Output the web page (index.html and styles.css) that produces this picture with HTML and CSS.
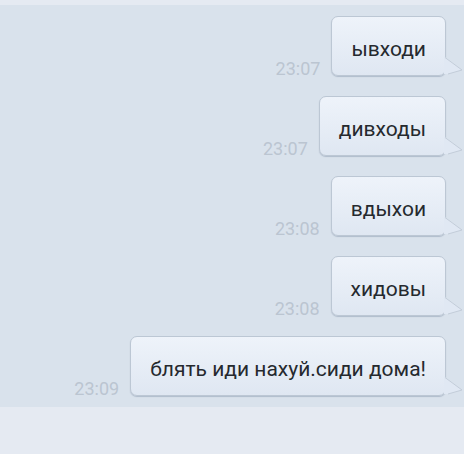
FILE: index.html
```html
<!DOCTYPE html>
<html lang="ru">
<head>
    <meta charset="UTF-8">
    <meta name="viewport" content="width=device-width, initial-scale=1.0">
    <title>Чат</title>
    <link rel="stylesheet" href="styles.css">
</head>
<body>
    <div class="top-strip"></div>

    <div class="chat">
        <div class="msg">
            <span class="time">23:07</span>
            <div class="bubble">ывходи<svg class="tail" viewBox="0 0 19 19"><path class="fill" d="M0 0 L1 0 L18 13 L4 17 L0 17 Z" /><path class="edge" d="M1 0.5 L18 13 L4 17" /></svg></div>
        </div>
        <div class="msg">
            <span class="time">23:07</span>
            <div class="bubble">дивходы<svg class="tail" viewBox="0 0 19 19"><path class="fill" d="M0 0 L1 0 L18 13 L4 17 L0 17 Z" /><path class="edge" d="M1 0.5 L18 13 L4 17" /></svg></div>
        </div>
        <div class="msg">
            <span class="time">23:08</span>
            <div class="bubble">вдыхои<svg class="tail" viewBox="0 0 19 19"><path class="fill" d="M0 0 L1 0 L18 13 L4 17 L0 17 Z" /><path class="edge" d="M1 0.5 L18 13 L4 17" /></svg></div>
        </div>
        <div class="msg">
            <span class="time">23:08</span>
            <div class="bubble">хидовы<svg class="tail" viewBox="0 0 19 19"><path class="fill" d="M0 0 L1 0 L18 13 L4 17 L0 17 Z" /><path class="edge" d="M1 0.5 L18 13 L4 17" /></svg></div>
        </div>
        <div class="msg">
            <span class="time">23:09</span>
            <div class="bubble">блять иди нахуй.сиди дома!<svg class="tail" viewBox="0 0 19 19"><path class="fill" d="M0 0 L1 0 L18 13 L4 17 L0 17 Z" /><path class="edge" d="M1 0.5 L18 13 L4 17" /></svg></div>
        </div>
    </div>

    <div class="input-area"></div>
</body>
</html>
```

FILE: styles.css
```css
* {
    margin: 0;
    padding: 0;
    box-sizing: border-box;
}

body {
    font-family: Roboto, "Noto Sans", sans-serif;
    background-color: #d9e2ec;
    width: 464px;
    height: 454px;
    overflow: hidden;
}

.top-strip {
    height: 5px;
    background: #e5eaf2;
}

/* message list */
.chat {
    display: flex;
    flex-direction: column;
    gap: 20px;
    padding: 11px 18px 11px 0;
}

.msg {
    display: flex;
    justify-content: flex-end;
    align-items: flex-end;
    gap: 11px;
}

.time {
    font-size: 18px;
    line-height: 18px;
    color: #bbc5d1;
    margin-bottom: -2px;
}

.bubble {
    position: relative;
    height: 60px;
    display: flex;
    align-items: center;
    padding: 5px 19px 0 19px;
    font-size: 21px;
    color: #25292e;
    background: linear-gradient(#eef3fa, #dfe7f2);
    border: 1px solid #bcc7d4;
    border-radius: 7px;
    box-shadow: 0 1px 1px rgba(80, 100, 130, 0.3);
}

/* little arrow on the right side */
.tail {
    position: absolute;
    right: -18px;
    bottom: -1px;
    width: 19px;
    height: 19px;
    overflow: visible;
}

.tail .fill {
    fill: #e0e8f3;
}

.tail .edge {
    fill: none;
    stroke: #c3cdd9;
    stroke-width: 1;
}

.input-area {
    height: 60px;
    background: #e5eaf2;
}
```
